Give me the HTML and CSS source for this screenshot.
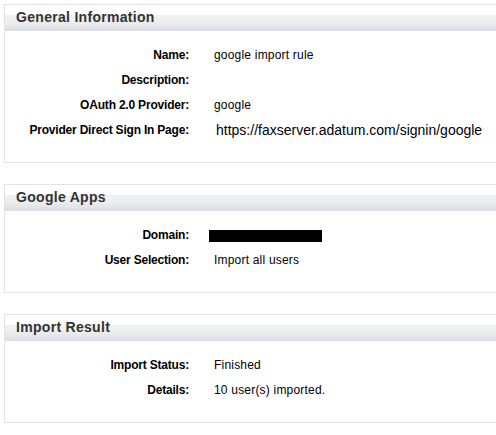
FILE: index.html
```html
<!DOCTYPE html>
<html lang="en">
<head>
  <meta charset="UTF-8">
  <title>Import Rule</title>
  <link rel="stylesheet" href="styles.css">
</head>
<body>
  <div class="panel">
    <div class="panel-header">General Information</div>
    <div class="panel-body">
      <div class="label">Name:</div>
      <div class="value">google import rule</div>
      <div class="label">Description:</div>
      <div class="value"></div>
      <div class="label">OAuth 2.0 Provider:</div>
      <div class="value">google</div>
      <div class="label">Provider Direct Sign In Page:</div>
      <div class="value url">https://faxserver.adatum.com/signin/google</div>
    </div>
  </div>

  <div class="panel">
    <div class="panel-header">Google Apps</div>
    <div class="panel-body">
      <div class="label">Domain:</div>
      <div class="value"><span class="redacted"></span></div>
      <div class="label">User Selection:</div>
      <div class="value">Import all users</div>
    </div>
  </div>

  <div class="panel">
    <div class="panel-header">Import Result</div>
    <div class="panel-body">
      <div class="label">Import Status:</div>
      <div class="value">Finished</div>
      <div class="label">Details:</div>
      <div class="value">10 user(s) imported.</div>
    </div>
  </div>
</body>
</html>
```

FILE: styles.css
```css
body {
  margin: 0;
  padding: 4px 0 0 4px;
  font-family: "Liberation Sans", Arial, sans-serif;
  background: #fff;
  color: #000;
}
.panel {
  border: 1px solid #e3e3e3;
  border-right: none;
  margin-bottom: 21px;
}
.panel-header {
  height: 26px;
  box-sizing: border-box;
  padding: 4px 0 0 11px;
  font-size: 14px;
  line-height: 16px;
  font-weight: bold;
  letter-spacing: 0.3px;
  color: #333;
  background: linear-gradient(to bottom, #fff 0, #fff 10px, #f1f1f1 10px, #eceeee 17px, #dcdde6 26px);
}
.panel-body {
  display: grid;
  grid-template-columns: 184px 1fr;
  column-gap: 25px;
  padding: 12px 0 19px;
}
.label, .value {
  height: 25px;
  line-height: 25px;
  font-size: 12px;
}
.label {
  text-align: right;
  font-weight: bold;
  letter-spacing: -0.2px;
}
.value {
  letter-spacing: 0.2px;
}
.value.url {
  font-size: 14px;
  letter-spacing: 0;
  padding-left: 2px;
}
.redacted {
  display: inline-block;
  width: 113px;
  height: 12px;
  margin-left: -5px;
  vertical-align: middle;
  background: #000;
}
```
